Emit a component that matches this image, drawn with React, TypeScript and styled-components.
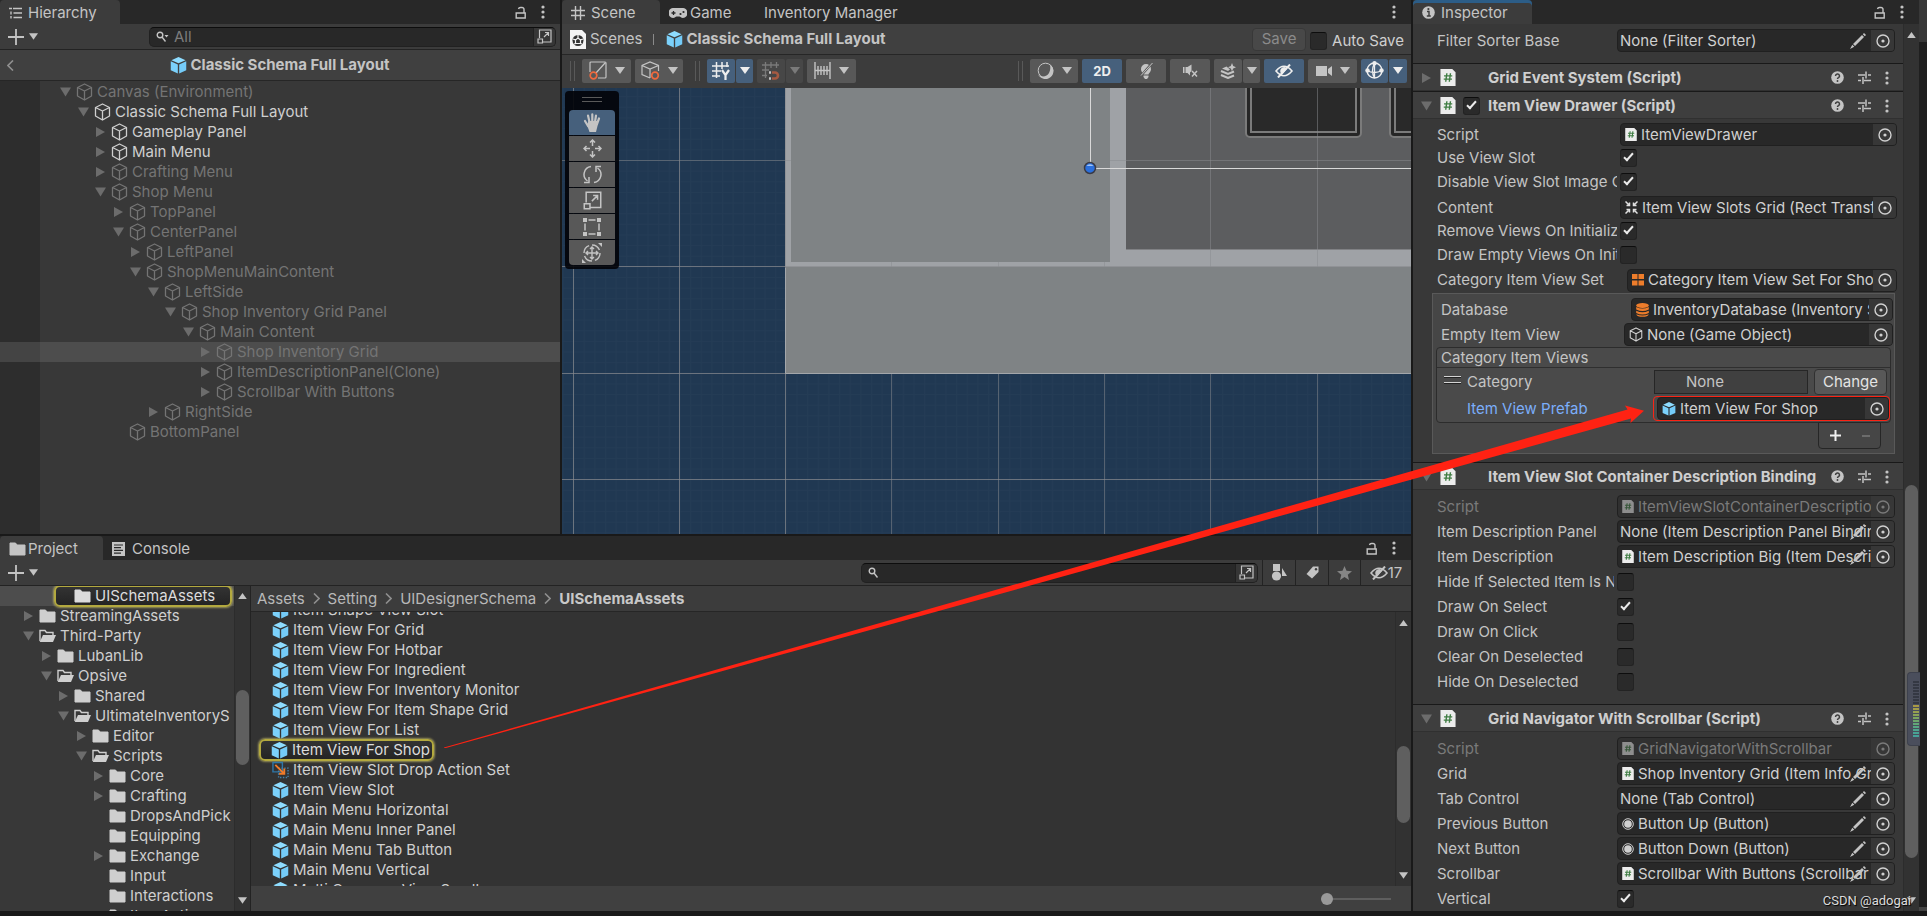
import React from 'react';
import styled, { createGlobalStyle, css } from 'styled-components';

const Global = createGlobalStyle`
  *, *::before, *::after { box-sizing: border-box; }
  body { margin: 0; background: #191919; overflow: hidden; }
  button, input { font: inherit; color: inherit; margin: 0; padding: 0; border: 0; background: none; }
  h1, h2, ul, ol { margin: 0; padding: 0; font-size: inherit; font-weight: inherit; list-style: none; }
  svg { display: block; flex: none; }
`;

/* ---------- icons ---------- */

const Glyph = styled.svg.attrs((p) => ({
  fill: p.fill ?? 'none',
  stroke: p.stroke ?? 'currentColor',
  'aria-hidden': true,
}))``;

const Caret = ({ size = 10 }: { size?: number }) => (
  <Glyph width={size} height="7" viewBox="0 0 10 7"><path d="M0 0h10L5 7z" fill="currentColor" stroke="none" /></Glyph>
);
const CaretUp = () => (
  <Glyph width="9" height="6" viewBox="0 0 10 7"><path d="M0 7h10L5 0z" fill="currentColor" stroke="none" /></Glyph>
);
const Arrow = ({ open }: { open: boolean }) => (
  <Glyph width="12" height="12" viewBox="0 0 12 12">
    <path d={open ? 'M1 1.500h11L6.500 10.500z' : 'M2 1l9 5-9 5z'} fill="#6c6c6c" stroke="none" />
  </Glyph>
);
const Cube = ({ size = 17 }: { size?: number }) => (
  <Glyph width={size} height={size + 1} viewBox="0 0 17 18" strokeWidth="1.300" strokeLinejoin="round">
    <path d="M8.500 1l7 3.500v8.500l-7 4-7-4V4.500zM1.500 4.500l7 3.500 7-3.500M8.500 8v9" />
  </Glyph>
);
const Prefab = ({ size = 17 }: { size?: number }) => (
  <Glyph width={size} height={size} viewBox="0 0 17 18" stroke="none">
    <path d="M8.500 0L16 3.400 8.500 6.700 1 3.400z" fill="#8edcff" />
    <path d="M.3 4.600l7.500 3.300v9.600L.3 14z" fill="#7bd1fb" />
    <path d="M16.700 4.600L9.200 7.900v9.600l7.500-3.500z" fill="#74cbf8" />
  </Glyph>
);
const Folder = ({ open }: { open?: boolean }) =>
  open ? (
    <Glyph width="17" height="14" viewBox="0 0 17 14">
      <path d="M1 12V1.500h5L7.500 3.500h6.500V6" strokeWidth="1.400" />
      <path d="M4 6h13l-3 7H.7z" fill="currentColor" stroke="none" />
    </Glyph>
  ) : (
    <Glyph width="17" height="14" viewBox="0 0 17 14">
      <path d="M1 1h5.500L8 3h8v10H1z" fill="currentColor" strokeLinejoin="round" />
    </Glyph>
  );
const Lock = () => (
  <Glyph width="12" height="13" viewBox="0 0 12 13" strokeWidth="1.400">
    <path d="M1.200 7h9v5h-9zM9 7V3.500a2 2 0 0 0-2-2H5.500a2 2 0 0 0-2 1.500" />
  </Glyph>
);
const Kebab = () => (
  <Glyph width="4" height="14" viewBox="0 0 4 14" stroke="none">
    {[2, 7, 12].map((y) => <circle key={y} cx="2" cy={y} r="1.600" fill="currentColor" />)}
  </Glyph>
);
const Plus = () => (
  <Glyph width="16" height="16" viewBox="0 0 16 16" strokeWidth="1.800"><path d="M8 0v16M0 8h16" /></Glyph>
);
const Lens = ({ menu }: { menu?: boolean }) => (
  <Glyph width="13" height="12" viewBox="0 0 13 12" strokeWidth="1.400">
    <circle cx="4" cy="4" r="2.800" /><path d="M6 6l3.500 4.500" />
    {menu && <path d="M8.500 4h4L10.500 6.500z" fill="currentColor" stroke="none" />}
  </Glyph>
);
const Expand = ({ size = 15 }: { size?: number }) => (
  <Glyph width={size} height={size} viewBox="0 0 15 15" strokeWidth="1.200">
    <path d="M2.500 9V1h11.500v12H6M1 10h4.500v4H1zM7 8l4.500-4.500M8 3.500h3.500V7" />
  </Glyph>
);
const Script = ({ small }: { small?: boolean }) => (
  <Glyph width={small ? 12 : 16} height={small ? 13 : 17} viewBox="0 0 16 18" stroke="none">
    <path d="M0 0h12.500L16 3.500V18H0z" fill="#ececec" />
    <path d="M6.800 4.500L5.600 13.500M10.600 4.500L9.400 13.500M3.800 7.300h8.700M3.500 10.700h8.700" stroke="#3f7d43" strokeWidth="1.500" />
  </Glyph>
);
const Target = () => (
  <Glyph width="14" height="14" viewBox="0 0 14 14" strokeWidth="1.400">
    <circle cx="7" cy="7" r="6" /><circle cx="7" cy="7" r="1.600" fill="currentColor" stroke="none" />
  </Glyph>
);
const Pencil = () => (
  <Glyph width="16" height="16" viewBox="0 0 16 16" stroke="none" fill="currentColor">
    <path d="M12 2l2 2L5 13l-2-2zM12.800 1.200l1.200-1.200L16 2l-1.200 1.200zM2.300 11.700l2 2L0 16z" />
  </Glyph>
);
const Help = () => (
  <Glyph width="13" height="13" viewBox="0 0 13 13" stroke="none">
    <circle cx="6.500" cy="6.500" r="6.300" fill="#c4c4c4" />
    <path d="M4.500 5a2 2 0 1 1 3 1.700c-.8.4-1 .7-1 1.400" stroke="#3e3e3e" strokeWidth="1.500" />
    <circle cx="6.500" cy="10" r=".95" fill="#3e3e3e" />
  </Glyph>
);
const Sliders = () => (
  <Glyph width="13" height="13" viewBox="0 0 13 13" strokeWidth="1.500">
    <path d="M0 4h7M10 4h3M8 0.500v7M0 9.500h3M6 9.500h7M5 6v7" />
  </Glyph>
);
const HierarchyGlyph = () => (
  <Glyph width="13" height="12" viewBox="0 0 13 12" strokeWidth="1.400">
    <path d="M0 1.500h3M4 1.500h9M4.500 6h8.500M4.500 10.500h8.500M2 4.500v3M2 9v2.500" />
  </Glyph>
);
const Hash = () => (
  <Glyph width="14" height="14" viewBox="0 0 14 14" strokeWidth="1.400"><path d="M4.500 0v14M9.500 0v14M0 4.500h14M0 9.500h14" /></Glyph>
);
const Gamepad = () => (
  <Glyph width="18" height="10" viewBox="0 0 18 10" stroke="none">
    <path d="M5 0h8a5 5 0 0 1 1 10c-2 0-2.500-1.500-3.500-1.500h-3C6.500 8.500 6 10 4 10A5 5 0 0 1 5 0z" fill="currentColor" />
    <path d="M2.500 5h4M4.500 3v4" stroke="#282828" strokeWidth="1.300" />
    <circle cx="11.500" cy="6" r="1.100" fill="#282828" /><circle cx="14.500" cy="4" r="1.100" fill="#282828" />
  </Glyph>
);
const Info = () => (
  <Glyph width="13" height="13" viewBox="0 0 13 13" stroke="none">
    <circle cx="6.500" cy="6.500" r="6.300" fill="currentColor" />
    <path d="M5 5.500h2v4M4.800 10h4" stroke="#3c3c3c" strokeWidth="1.400" /><circle cx="6.400" cy="3.100" r="1.100" fill="#3c3c3c" />
  </Glyph>
);
const ConsoleGlyph = () => (
  <Glyph width="13" height="14" viewBox="0 0 13 14" stroke="none">
    <path d="M0 0h13v14H0z" fill="currentColor" />
    <path d="M2 3h9M2 5.700h7M2 8.400h9M2 11.100h7" stroke="#282828" strokeWidth="1.200" />
  </Glyph>
);
const SceneFile = () => (
  <Glyph width="16" height="19" viewBox="0 0 16 19" stroke="none">
    <path d="M0 0h12l4 4v15H0z" fill="#f4f4f4" />
    <circle cx="8" cy="10.500" r="5.500" fill="#333" />
    <path d="M8 5v3l-2.500 2M8 8l2.500 2M3 9l2.500 1v3.500L4 14M13 9l-2.500 1v3.500L12 14M5.500 13.500h5" stroke="#f4f4f4" strokeWidth="1.200" />
  </Glyph>
);
const PivotIcon = () => (
  <Glyph width="18" height="19" viewBox="0 0 18 19" strokeWidth="1.200">
    <path d="M1 11V2q0-1 1-1h14q1 0 1 1v14q0 1-1 1H9M7 12l9-10" />
    <circle cx="4.500" cy="14.500" r="3.300" stroke="#f0693d" strokeWidth="1.700" />
  </Glyph>
);
const LocalIcon = () => (
  <Glyph width="19" height="19" viewBox="0 0 19 19" strokeWidth="1.200">
    <path d="M9 17l-8-3.500v-9L9 1l8.500 3.500V10M1 4.500l8 3.500 8.500-3.500M9 8v9" />
    <circle cx="14" cy="14.500" r="3.300" stroke="#f0693d" strokeWidth="1.700" />
  </Glyph>
);
const GridY = () => (
  <Glyph width="18" height="18" viewBox="0 0 18 18" strokeWidth="1.500">
    <path d="M4.500 0v16M10 0v7M15 0v5M0 4h17M0 9h9M0 14h8" />
    <path d="M10 8l3.500 5V18M17 8l-3.500 5" strokeWidth="2.200" />
  </Glyph>
);
const GridSnap = () => (
  <Glyph width="18" height="18" viewBox="0 0 18 18" strokeWidth="1.300">
    <path d="M3.500 0v16M9 0v6M14.500 0v6M0 3h17M0 8h7M0 13.500h5" />
    <path d="M10 10.500h3a3 3 0 0 1 0 6h-3" stroke="#a55a42" strokeWidth="2.600" />
    <path d="M7 10.500h2M7 16.500h2" stroke="#c4c4c4" strokeWidth="2.600" />
  </Glyph>
);
const Ruler = () => (
  <Glyph width="17" height="18" viewBox="0 0 17 18" strokeWidth="1.400">
    <path d="M1 0v17M4 4v9M7 4v9M10 4v9M13 4v9M16 0v17M1 8.500h15" />
  </Glyph>
);
const Shading = () => (
  <Glyph width="17" height="18" viewBox="0 0 17 18">
    <circle cx="8.500" cy="8.500" r="7.300" strokeWidth="1" />
    <path d="M13 2.500A8 8 0 1 1 1 12c3 4 9 3 11-1 1.600-3 1.500-6 1-8.500z" fill="currentColor" stroke="none" />
  </Glyph>
);
const Bulb = () => (
  <Glyph width="15" height="16" viewBox="0 0 15 16" stroke="none">
    <path d="M7 1a5 5 0 0 1 5 5c0 3-2 3.500-2.500 5.500h-5C4 9.500 2 9 2 6a5 5 0 0 1 5-5zM4.500 12.500h5V14L8 16H6l-1.500-2z" fill="currentColor" />
    <path d="M1 14L13 0" stroke="#585858" strokeWidth="2.200" /><path d="M2 12.500L13.500 0" stroke="currentColor" />
  </Glyph>
);
const Mute = () => (
  <Glyph width="15" height="13" viewBox="0 0 15 13" strokeWidth="1.500">
    <path d="M0 3h1.500v6H0zM2.500 3h2L8.500.5V7L7 8.500v3L4.500 9h-2z" fill="currentColor" stroke="none" /><path d="M9 7l5 5.500M14 7l-5 5.500" />
  </Glyph>
);
const Effects = () => (
  <Glyph width="16" height="16" viewBox="0 0 16 16">
    <path d="M1 8l7 3 6-2.500" strokeWidth="2" /><path d="M1 12l7 3 6-2.500" strokeWidth="2" />
    <path d="M2 5.500L6.500 3.500l3.500 3L8 8z" fill="currentColor" stroke="none" />
    <path d="M12 0l1.200 3 2.800 1.200-2.800 1.200L12 8.300l-1.200-2.900L8 4.200 10.800 3z" fill="currentColor" stroke="none" />
  </Glyph>
);
const EyeOff = () => (
  <Glyph width="18" height="14" viewBox="0 0 18 14" strokeWidth="1.600">
    <path d="M1 7q8-9.500 16 0-8 9.500-16 0z" /><path d="M6 7a3 3 0 0 1 5-2.300L7 9.300A3 3 0 0 1 6 7z" fill="currentColor" /><path d="M3 13.500L15 .5" strokeWidth="2" />
  </Glyph>
);
const Camera = () => (
  <Glyph width="16" height="12" viewBox="0 0 16 12" stroke="none" fill="currentColor"><path d="M0 1h11v10H0zM12 4l4-3v10l-4-3z" /></Glyph>
);
const Gizmo = () => (
  <Glyph width="19" height="19" viewBox="0 0 19 19" strokeWidth="1.300">
    <circle cx="9.500" cy="9.500" r="7.500" /><path d="M9.500 2q-4 8 0 15M2 9.500q7 4 15 0M9.500 2v15" />
    <g fill="currentColor" stroke="none"><circle cx="9.500" cy="2.300" r="2.200" /><circle cx="2.500" cy="9.500" r="2.200" /><circle cx="16.500" cy="9.500" r="2.200" /></g>
  </Glyph>
);
const Hand = () => (
  <Glyph width="19" height="20" viewBox="0 0 19 20" strokeLinecap="round" strokeWidth="2.200">
    <path d="M6.500 9L5 2.500M9.300 9V1.400M12 9l1-6.500M14 11l2-5.500M5 13L2 8" />
    <path d="M5.500 8h8.500l1 3-2 8H6.500L4 12z" fill="currentColor" stroke="none" />
  </Glyph>
);
const Move = () => (
  <Glyph width="19" height="19" viewBox="0 0 19 19" strokeWidth="1.500">
    <path d="M9.500 1v6M9.500 12v6M1 9.500h6M12 9.500h6M7 3.500L9.500 1 12 3.500M7 15.500L9.500 18l2.500-2.500M3.500 7L1 9.500 3.500 12M15.500 7L18 9.500 15.500 12" />
  </Glyph>
);
const Rotate = () => (
  <Glyph width="19" height="19" viewBox="0 0 19 19" strokeWidth="1.500">
    <path d="M8 1.500A8 8 0 0 0 4.500 16M1 17.500h5V12M11 17.500A8 8 0 0 0 14.500 3M18 1.500h-5V7" />
  </Glyph>
);
const RectTool = () => (
  <Glyph width="18" height="18" viewBox="0 0 18 18" strokeWidth="1.500">
    <path d="M5.500 2h7M5.500 16h7M2 5.500v7M16 5.500v7" />
    <path d="M0 0h4v4H0zM14 0h4v4h-4zM0 14h4v4H0zM14 14h4v4h-4z" fill="currentColor" stroke="none" />
  </Glyph>
);
const Transform = () => (
  <Glyph width="20" height="20" viewBox="0 0 20 20" strokeWidth="1.400">
    <circle cx="10" cy="10" r="8" strokeDasharray="9.500 3" />
    <path d="M10 4v12M4 10h12M8 6l2-2 2 2M8 14l2 2 2-2M6 8l-2 2 2 2M14 8l2 2-2 2" />
    <path d="M16 0h4v4zM0 16v4h4z" fill="currentColor" stroke="none" />
  </Glyph>
);
const DropAction = () => (
  <Glyph width="17" height="18" viewBox="0 0 18 18" strokeWidth="1.500">
    <path d="M1 1h10v10H1z" stroke="#2f77a8" /><path d="M7 7h10v10H7z" stroke="#4682ab" strokeDasharray="1.500 1.500" />
    <path d="M3.500 3.500l9 9M13 7.500V13H7.500" stroke="#f07b2a" strokeWidth="2" />
  </Glyph>
);
const RectTransformIcon = () => (
  <Glyph width="13" height="13" viewBox="0 0 13 13" strokeWidth="1.500" stroke="#e0e0e0">
    <path d="M0.500 0.500l3 3M12.500 0.500L9.500 3.500M0.500 12.500l3-3M12.500 12.500L9.500 9.500M4.500 1.500v3h-3M8.500 1.500v3h3M1.500 8.500h3v3M11.500 8.500h-3v3" />
  </Glyph>
);
const CategorySet = () => (
  <Glyph width="12" height="12" viewBox="0 0 12 12" stroke="none" fill="#ee7d2b"><path d="M0 0h5.500v5H0zM6.500 0H12v5H6.500zM0 6.500h5.500v5H0zM6.500 6.500H12v5H6.500z" /></Glyph>
);
const DatabaseIcon = () => (
  <Glyph width="13" height="14" viewBox="0 0 13 14" stroke="none" fill="#ee7d2b">
    <ellipse cx="6.500" cy="2.500" rx="6.300" ry="2.400" />
    <path d="M.2 4q6.300 3 12.600 0v2.500q-6.300 3-12.600 0zM.2 7.700q6.300 3 12.600 0V10q-6.300 3-12.600 0zM.2 11.200q6.300 2.800 12.600 0-1 2.600-6.300 2.600T.2 11.200z" />
  </Glyph>
);
const ButtonIcon = () => (
  <Glyph width="12" height="12" viewBox="0 0 12 12"><circle cx="6" cy="6" r="5.300" /><circle cx="6" cy="6" r="3.800" fill="currentColor" stroke="none" /></Glyph>
);
const Shapes = () => (
  <Glyph width="16" height="17" viewBox="0 0 16 17" stroke="none" fill="currentColor"><path d="M2 0h7v7H2zM11 4l5 8h-5z" /><circle cx="5.500" cy="12" r="4.600" /></Glyph>
);
const Tag = () => (
  <Glyph width="13" height="13" viewBox="0 0 13 13" stroke="none"><path d="M7 0.500h5.500V6L6 12.500.5 8z" fill="currentColor" /><circle cx="10" cy="3.200" r="1.200" fill="#3c3c3c" /></Glyph>
);
const Star = () => (
  <Glyph width="15" height="14" viewBox="0 0 15 14" stroke="none" fill="currentColor"><path d="M7.500 0l2 4.800 5.500.4-4.200 3.500L12 14l-4.500-2.900L3 14l1.300-5.300L0 5.200l5.500-.4z" /></Glyph>
);
const Chevron = ({ back }: { back?: boolean }) => (
  <Glyph width="7" height="11" viewBox="0 0 7 11" strokeWidth="1.600" stroke="#8f8f8f"><path d={back ? 'M6 .5L1 5.500l5 5' : 'M1 .5l5 5-5 5'} /></Glyph>
);

/* ---------- shell ---------- */

const Editor = styled.main`
  position: relative;
  display: grid;
  grid-template-columns: minmax(0, 1fr) 508px 8px;
  height: 100vh;
  padding-bottom: 5px;
  overflow: hidden;
  background: #191919;
  color: #c4c4c4;
  font: 400 15px/20px Inter, 'Liberation Sans', sans-serif;
  white-space: nowrap;
`;
const Workspace = styled.div`
  display: grid;
  grid-template-columns: 560px minmax(0, 1fr);
  grid-template-rows: minmax(0, 534fr) minmax(0, 375fr);
  gap: 2px;
  min-height: 0;
`;
const Panel = styled.section<{ $wide?: boolean }>`
  display: flex;
  flex-direction: column;
  min-width: 0;
  min-height: 0;
  overflow: hidden;
  background: #383838;
  ${(p) => p.$wide && css`grid-column: 1 / -1;`}
`;
const SidePanel = styled(Panel)`
  margin-left: 2px;
`;
const TabBar = styled.header`
  display: flex;
  align-items: stretch;
  flex: none;
  height: 24px;
  background: #282828;
`;
const Tab = styled.button<{ $active?: boolean; $focus?: boolean; $width?: number; $gap?: number }>`
  display: flex;
  align-items: center;
  gap: ${(p) => p.$gap ?? 6}px;
  width: ${(p) => (p.$width ? `${p.$width}px` : 'auto')};
  padding: 1px 9px 0;
  border-radius: 4px 4px 0 0;
  background: ${(p) => (p.$active ? '#3c3c3c' : 'transparent')};
  box-shadow: ${(p) => (p.$focus ? 'inset 0 3px #2c5d87' : 'none')};
`;
const TabActions = styled.div`
  display: flex;
  align-items: center;
  gap: 14px;
  margin-left: auto;
  padding-right: 15px;
`;
const IconButton = styled.button`
  display: grid;
  place-items: center;
`;
const Toolbar = styled.div`
  display: flex;
  align-items: center;
  flex: none;
  height: 26px;
  background: #3c3c3c;
  border-bottom: 1px solid #232323;
`;
const AddButton = styled.button`
  display: flex;
  align-items: center;
  gap: 5px;
  margin-left: 8px;
`;
const SearchBox = styled.label<{ $width: number }>`
  display: flex;
  align-items: center;
  gap: 5px;
  width: ${(p) => p.$width}px;
  height: 20px;
  margin-left: auto;
  margin-right: 4px;
  padding-left: 6px;
  overflow: hidden;
  border: 1px solid #212121;
  border-top-color: #0d0d0d;
  border-radius: 5px;
  background: #282828;
  input { flex: 1; min-width: 0; outline: 0; }
  input::placeholder { color: #7c7c7c; opacity: 1; }
  button { width: 22px; height: 18px; background: #363636; border-left: 1px solid #212121; }
`;

/* ---------- trees ---------- */

const TreeList = styled.ul`
  flex: 1;
  min-width: 0;
  overflow: hidden;
`;
const TreeRow = styled.li<{ $depth: number; $base: number; $dim?: boolean; $selected?: boolean }>`
  display: flex;
  align-items: center;
  height: 20px;
  padding-left: ${(p) => p.$base + Math.round(p.$depth * 17.5)}px;
  color: ${(p) => (p.$dim ? '#747474' : '#cfcfcf')};
  background: ${(p) => (p.$selected ? 'rgba(255,255,255,.11)' : 'none')};
`;
const ArrowSlot = styled.span`
  flex: none;
  width: 17px;
`;
const RowText = styled.span`
  margin-left: 4px;
`;
const HierarchyTitle = styled.div`
  display: grid;
  grid-template-columns: 1fr auto 1fr;
  align-items: center;
  flex: none;
  height: 31px;
  padding: 0 7px;
  background: #404040;
  border-bottom: 1px solid #262626;
  > button { justify-self: start; }
`;
const Titled = styled.strong`
  display: flex;
  align-items: center;
  gap: 3px;
  font-weight: 700;
`;
const HierarchyBody = styled.div`
  display: flex;
  flex: 1;
  min-height: 0;
  padding-top: 1px;
  background: linear-gradient(90deg, #2d2d2d 40px, #383838 40px);
`;

/* ---------- scene ---------- */

const SceneBar = styled.div`
  display: flex;
  align-items: center;
  flex: none;
  height: 31px;
  padding: 0 7px 0 8px;
  background: #404040;
  border-bottom: 1px solid #262626;
`;
const Crumb = styled.span`
  display: flex;
  align-items: center;
  gap: 4px;
  padding-right: 11px;
`;
const CrumbRule = styled.i`
  width: 1px;
  height: 11px;
  margin-right: 12px;
  background: #8a8a8a;
`;
const SaveButton = styled.button`
  height: 23px;
  width: 54px;
  margin: 0 4px 0 auto;
  border: 1px solid #383838;
  border-radius: 4px;
  background: #484848;
  color: #8b8b8b;
`;
const CheckLabel = styled.label`
  display: flex;
  align-items: center;
  gap: 5px;
  padding-top: 4px;
  color: #cfcfcf;
`;
const Check = styled.input.attrs({ type: 'checkbox' })`
  appearance: none;
  position: relative;
  flex: none;
  width: 17px;
  height: 18px;
  border: 1px solid #232323;
  border-top-color: #0d0d0d;
  border-radius: 3px;
  background: #2a2a2a;
  &:checked::after {
    content: '';
    position: absolute;
    left: 5px;
    top: 1px;
    width: 5px;
    height: 10px;
    border: solid #ebebeb;
    border-width: 0 2px 2px 0;
    transform: rotate(42deg);
  }
`;
const ToolStrip = styled.div`
  display: flex;
  align-items: center;
  flex: none;
  gap: 4px;
  height: 33px;
  padding: 0 4px 2px 8px;
  background: #3c3c3c;
`;
const Grip = styled.i<{ $push?: boolean }>`
  width: 5px;
  height: 20px;
  margin-left: ${(p) => (p.$push ? 'auto' : '8px')};
  margin-right: 3px;
  border: solid #595959;
  border-width: 0 1px;
  &:first-child { margin-left: 0; }
`;
const ToolGroup = styled.div<{ $off?: boolean }>`
  display: flex;
  gap: 1px;
  color: ${(p) => (p.$off ? '#7a7a7a' : '#c4c4c4')};
`;
const Tool = styled.button<{ $w: number; $on?: boolean; $off?: boolean }>`
  display: flex;
  align-items: center;
  justify-content: center;
  gap: 8px;
  width: ${(p) => p.$w}px;
  height: 24px;
  border-radius: 2px;
  font-weight: 700;
  font-size: 13px;
  background: ${(p) => (p.$on ? '#46607c' : p.$off ? '#474747' : '#585858')};
  color: ${(p) => (p.$on ? '#eeeeee' : 'inherit')};
`;
const Viewport = styled.div`
  position: relative;
  flex: 1;
  min-height: 0;
  overflow: hidden;
  background: #203852;
  > svg { width: 100%; height: 100%; }
`;
const Palette = styled.div`
  position: absolute;
  left: 3px;
  top: 3px;
  display: flex;
  flex-direction: column;
  gap: 1px;
  padding: 6px 4px 4px;
  border-radius: 4px;
  background: rgba(2, 3, 8, .9);
`;
const PaletteGrip = styled.i`
  width: 20px;
  height: 5px;
  margin: 0 auto 7px;
  border: solid #5a5a5a;
  border-width: 1px 0;
`;
const PaletteTool = styled.button<{ $on?: boolean }>`
  display: grid;
  place-items: center;
  width: 46px;
  height: 25px;
  background: ${(p) => (p.$on ? '#46607c' : '#585858')};
  &:first-of-type { border-radius: 4px 4px 0 0; }
  &:last-of-type { border-radius: 0 0 4px 4px; }
`;

/* ---------- project ---------- */

const ProjectBody = styled.div`
  display: grid;
  grid-template-columns: 250px minmax(0, 1fr);
  flex: 1;
  min-height: 0;
  column-gap: 1px;
  background: #232323;
`;
const Column = styled.div`
  display: flex;
  flex-direction: column;
  min-width: 0;
  min-height: 0;
  background: #333333;
`;
const Pane = styled.div<{ $bg?: string }>`
  display: flex;
  flex: 1;
  min-width: 0;
  min-height: 0;
  overflow: hidden;
  background: ${(p) => p.$bg ?? '#333333'};
`;
const ScrollTrack = styled.div<{ $start: number; $size: number; $lead: number }>`
  display: flex;
  flex-direction: column;
  align-items: center;
  justify-content: space-between;
  flex: none;
  position: relative;
  width: 16px;
  padding: ${(p) => p.$lead}px 0 7px;
  border-left: 1px solid #2c2c2c;
  background: #323232;
  &::after {
    content: '';
    position: absolute;
    left: 1px;
    right: 1px;
    top: ${(p) => p.$start}%;
    height: ${(p) => p.$size}%;
    border-radius: 7px;
    background: #5f5f5f;
  }
`;
const Halo = styled.span`
  display: flex;
  align-items: center;
  height: 22px;
  margin-left: -20px;
  padding: 0 15px 0 18px;
  border: 2px solid #b3a93f;
  border-radius: 6px;
  background: linear-gradient(#333, #242424);
  box-shadow: 0 0 2px 1px rgba(214, 204, 110, .6);
  color: #dcdcdc;
`;
const AssetHalo = styled(Halo)`
  margin-left: -13px;
  padding: 0 2px 0 10px;
`;
const Crumbs = styled.ol`
  display: flex;
  align-items: center;
  gap: 8px;
  flex: none;
  height: 26px;
  padding-left: 6px;
  background: #3c3c3c;
  border-bottom: 1px solid #262626;
  li { display: flex; align-items: center; gap: 8px; }
  a { color: #b8b8b8; text-decoration: none; }
  a[aria-current] { font-weight: 700; color: #c8c8c8; }
`;
const AssetList = styled.ul`
  flex: 1;
  margin-top: -12px;
`;
const AssetRow = styled.li`
  display: flex;
  align-items: center;
  height: 20px;
  padding-left: 21px;
  color: #d0d0d0;
`;
const Footer = styled.div`
  display: flex;
  align-items: center;
  justify-content: flex-end;
  flex: none;
  height: 25px;
  padding-right: 20px;
  background: #404040;
`;
const Zoom = styled.input.attrs({ type: 'range' })`
  appearance: none;
  width: 70px;
  height: 14px;
  &::-webkit-slider-runnable-track { height: 2px; background: #5e5e5e; }
  &::-webkit-slider-thumb { appearance: none; width: 12px; height: 12px; margin-top: -5px; border-radius: 50%; background: #999; }
`;
const FilterButton = styled.button<{ $w: number; $muted?: boolean }>`
  display: flex;
  align-items: center;
  justify-content: center;
  width: ${(p) => p.$w}px;
  height: 25px;
  border-left: 1px solid #232323;
  color: ${(p) => (p.$muted ? '#858585' : 'inherit')};
`;
const Filters = styled.div`
  display: flex;
`;

/* ---------- inspector ---------- */

const InspectorBody = styled.div`
  display: flex;
  flex: 1;
  min-height: 0;
`;
const Components = styled.div`
  flex: 1;
  min-width: 0;
  overflow: hidden;
`;
const ComponentHeader = styled.div`
  display: flex;
  align-items: center;
  height: 28px;
  padding: 0 14px 0 7px;
  border: solid #191919;
  border-width: 1px 0 0;
  background: #3e3e3e;
  box-shadow: inset 0 -1px #303030;
`;
const HeaderIcon = styled.span`
  display: flex;
  width: 23px;
  margin-left: 8px;
`;
const HeaderToggle = styled.span`
  display: flex;
  width: 25px;
`;
const ComponentTitle = styled.h2`
  flex: 1;
  min-width: 0;
  font-weight: 700;
  color: #cfcfcf;
`;
const HeaderActions = styled.div`
  display: flex;
  align-items: center;
  justify-content: space-between;
  width: 58px;
`;
const Rows = styled.div<{ $end: number; $pad: string }>`
  display: flex;
  flex-direction: column;
  padding: ${(p) => p.$pad};
  padding-left: 24px;
  padding-right: ${(p) => p.$end}px;
`;
const Property = styled.div<{ $h?: number; $dim?: boolean }>`
  display: flex;
  align-items: center;
  height: ${(p) => p.$h ?? 25}px;
  ${(p) => p.$dim && css`color: #7a7a7a;`}
`;
const PropertyLabel = styled.label<{ $w: number; $accent?: boolean }>`
  flex: none;
  width: ${(p) => p.$w}px;
  margin-right: 3px;
  overflow: hidden;
  ${(p) => p.$accent && css`color: #7baefa;`}
`;
const ObjectBox = styled.div<{ $dim?: boolean }>`
  position: relative;
  display: flex;
  align-items: stretch;
  flex: 1;
  min-width: 0;
  height: 23px;
  overflow: hidden;
  border: 1px solid #202020;
  border-radius: 4px;
  background: ${(p) => (p.$dim ? '#303030' : '#282828')};
  color: ${(p) => (p.$dim ? '#7a7a7a' : '#d0d0d0')};
  > svg { position: absolute; right: 28px; top: 3px; color: #c4c4c4; }
`;
const ObjectValue = styled.output<{ $iconless?: boolean; $dim?: boolean }>`
  display: flex;
  align-items: center;
  gap: 4px;
  flex: 1;
  min-width: 0;
  overflow: hidden;
  padding-left: ${(p) => (p.$iconless ? 2 : 4)}px;
  > svg { opacity: ${(p) => (p.$dim ? 0.5 : 1)}; }
`;
const TargetButton = styled(IconButton)`
  flex: none;
  width: 23px;
  background: #373737;
`;
const Group = styled.div`
  height: 161px;
  margin: 0 2px 8px -5px;
  padding: 3px 1px 0 3px;
  border: 1px solid #595959;
  background: #464646;
`;
const GroupRow = styled(Property)`
  padding-left: 5px;
`;
const ListBox = styled.div`
  margin-right: 2px;
  border: 1px solid #2c2c2c;
  border-radius: 4px;
  background: #4a4a4a;
`;
const ListHead = styled.div`
  height: 20px;
  padding-left: 4px;
  line-height: 19px;
  border-bottom: 1px solid #2f2f2f;
`;
const ListRow = styled.div`
  display: flex;
  align-items: center;
  height: 27px;
  padding-left: 7px;
`;
const DragHandle = styled.i`
  width: 17px;
  height: 7px;
  margin: 0 6px 4px 0;
  border: solid #d4d4d4;
  border-width: 1px 0;
  box-shadow: 0 1px #222, inset 0 1px #222;
`;
const ListIndent = styled.span`
  width: 23px;
`;
const CategoryValue = styled.output`
  width: 154px;
  height: 24px;
  padding-left: 31px;
  border: 1px solid #262626;
  background: #404040;
  line-height: 22px;
`;
const ChangeButton = styled.button`
  width: 73px;
  height: 26px;
  margin-left: 6px;
  border: 1px solid #303030;
  border-radius: 4px;
  background: #585858;
  color: #e4e4e4;
`;
const Marked = styled.div`
  display: flex;
  align-items: center;
  flex: 1;
  min-width: 0;
  height: 25px;
  padding-left: 3px;
  border: 1px solid #fb2314;
  border-radius: 4px;
`;
const ListFooter = styled.div`
  display: flex;
  align-items: center;
  justify-content: space-around;
  width: 63px;
  height: 27px;
  margin: -1px 12px 0 auto;
  border: 1px solid #262626;
  border-radius: 0 0 4px 4px;
  background: #464646;
  color: #f0f0f0;
  button:disabled { color: #6c6c6c; }
`;
const Rail = styled.aside`
  display: flex;
  flex-direction: column;
  justify-content: space-between;
  background: #1f1f1f;
  &::before { content: ''; height: 42px; background: #383838; }
  &::after { content: ''; height: 4px; background: #444; }
`;
const Meter = styled.div`
  position: absolute;
  right: 7px;
  top: 672px;
  width: 13px;
  height: 74px;
  padding: 8px 0 7px 5px;
  border: 1px solid #3d414d;
  border-right: 0;
  border-radius: 4px 0 0 4px;
  background: #4a4e5c;
`;
const Annotation = styled.svg`
  position: absolute;
  right: 283px;
  top: 405px;
  pointer-events: none;
`;
const Watermark = styled.span`
  position: absolute;
  right: 16px;
  bottom: 5px;
  font: 13px/20px Roboto, sans-serif;
  color: #dcdcdc;
  text-shadow: 1px 1px 1px #000;
`;

/* ---------- data ---------- */

type Node = [name: string, depth: number, state: 'open' | 'closed' | 'leaf', lit?: boolean];

const hierarchy: Node[] = [
  ['Canvas (Environment)', 0, 'open'],
  ['Classic Schema Full Layout', 1, 'open', true],
  ['Gameplay Panel', 2, 'closed', true],
  ['Main Menu', 2, 'closed', true],
  ['Crafting Menu', 2, 'closed'],
  ['Shop Menu', 2, 'open'],
  ['TopPanel', 3, 'closed'],
  ['CenterPanel', 3, 'open'],
  ['LeftPanel', 4, 'closed'],
  ['ShopMenuMainContent', 4, 'open'],
  ['LeftSide', 5, 'open'],
  ['Shop Inventory Grid Panel', 6, 'open'],
  ['Main Content', 7, 'open'],
  ['Shop Inventory Grid', 8, 'closed'],
  ['ItemDescriptionPanel(Clone)', 8, 'closed'],
  ['Scrollbar With Buttons', 8, 'closed'],
  ['RightSide', 5, 'closed'],
  ['BottomPanel', 3, 'leaf'],
];

const folders: Node[] = [
  ['UISchemaAssets', 2, 'leaf'],
  ['StreamingAssets', 0, 'closed'],
  ['Third-Party', 0, 'open'],
  ['LubanLib', 1, 'closed'],
  ['Opsive', 1, 'open'],
  ['Shared', 2, 'closed'],
  ['UltimateInventoryS', 2, 'open'],
  ['Editor', 3, 'closed'],
  ['Scripts', 3, 'open'],
  ['Core', 4, 'closed'],
  ['Crafting', 4, 'closed'],
  ['DropsAndPick', 4, 'leaf'],
  ['Equipping', 4, 'leaf'],
  ['Exchange', 4, 'closed'],
  ['Input', 4, 'leaf'],
  ['Interactions', 4, 'leaf'],
  ['ItemActions', 4, 'leaf'],
];

const assets = [
  'Item Shape View Slot', 'Item View For Grid', 'Item View For Hotbar', 'Item View For Ingredient',
  'Item View For Inventory Monitor', 'Item View For Item Shape Grid', 'Item View For List', 'Item View For Shop',
  'Item View Slot Drop Action Set', 'Item View Slot', 'Main Menu Horizontal', 'Main Menu Inner Panel',
  'Main Menu Tab Button', 'Main Menu Vertical', 'Multi Currency View Small',
];

/* ---------- parts ---------- */

type ValueProps = { text: string; icon?: React.ReactNode; pencil?: boolean; dim?: boolean };

function ObjectField({ label, text, icon, pencil, dim }: ValueProps & { label: string }) {
  return (
    <ObjectBox $dim={dim}>
      <ObjectValue aria-label={label} $iconless={!icon} $dim={dim}>{icon}<span>{text}</span></ObjectValue>
      {pencil && <Pencil />}
      <TargetButton aria-label={`Pick ${label}`} disabled={dim}><Target /></TargetButton>
    </ObjectBox>
  );
}

function Field({ label, labelWidth = 177, h, ...rest }: ValueProps & { label: string; labelWidth?: number; h?: number }) {
  return (
    <Property $h={h} $dim={rest.dim}>
      <PropertyLabel as="span" $w={labelWidth}>{label}</PropertyLabel>
      <ObjectField label={label} {...rest} />
    </Property>
  );
}

function Toggle({ label, checked, labelWidth = 177, h }: { label: string; checked?: boolean; labelWidth?: number; h?: number }) {
  const id = React.useId();
  return (
    <Property $h={h}>
      <PropertyLabel $w={labelWidth} htmlFor={id}>{label}</PropertyLabel>
      <Check id={id} defaultChecked={checked} />
    </Property>
  );
}

function Header({ title, open, enabled }: { title: string; open: boolean; enabled?: boolean }) {
  return (
    <ComponentHeader>
      <IconButton aria-label={`Toggle ${title}`}><Arrow open={open} /></IconButton>
      <HeaderIcon><Script /></HeaderIcon>
      <HeaderToggle>{enabled && <Check defaultChecked aria-label={`Enable ${title}`} />}</HeaderToggle>
      <ComponentTitle>{title}</ComponentTitle>
      <HeaderActions>
        <IconButton aria-label="Help"><Help /></IconButton>
        <IconButton aria-label="Presets"><Sliders /></IconButton>
        <IconButton aria-label="More"><Kebab /></IconButton>
      </HeaderActions>
    </ComponentHeader>
  );
}

function PanelActions() {
  return (
    <TabActions>
      <IconButton aria-label="Lock"><Lock /></IconButton>
      <IconButton aria-label="More"><Kebab /></IconButton>
    </TabActions>
  );
}

function Hierarchy() {
  return (
    <Panel aria-label="Hierarchy">
      <TabBar>
        <Tab $active $width={120}><HierarchyGlyph />Hierarchy</Tab>
        <PanelActions />
      </TabBar>
      <Toolbar>
        <AddButton aria-label="Create"><Plus /><Caret size={9} /></AddButton>
        <SearchBox $width={407}>
          <Lens menu />
          <input placeholder="All" aria-label="Search hierarchy" />
          <IconButton aria-label="Open search window"><Expand /></IconButton>
        </SearchBox>
      </Toolbar>
      <HierarchyTitle>
        <IconButton aria-label="Back"><Chevron back /></IconButton>
        <Titled><Prefab />Classic Schema Full Layout</Titled>
      </HierarchyTitle>
      <HierarchyBody>
        <TreeList>
          {hierarchy.map(([name, depth, state, lit]) => (
            <TreeRow key={name} $depth={depth} $base={59} $dim={!lit} $selected={name === 'Shop Inventory Grid'}>
              <ArrowSlot>{state !== 'leaf' && <Arrow open={state === 'open'} />}</ArrowSlot>
              <Cube />
              <RowText>{name}</RowText>
            </TreeRow>
          ))}
        </TreeList>
      </HierarchyBody>
    </Panel>
  );
}

const gridX = [11, 117, 223, 329, 436, 542, 648, 755];
const gridY = [72, 178, 285, 391];

function SceneCanvas() {
  return (
    <svg aria-hidden="true">
      <defs>
        <pattern id="minor" width="10.640" height="10.640" patternUnits="userSpaceOnUse" x="11" y="72">
          <path d="M.5 0v10.640M0 .5h10.640" stroke="#fff" strokeOpacity=".018" fill="none" />
        </pattern>
      </defs>
      <rect width="100%" height="100%" fill="url(#minor)" />
      <rect x="223" width="100%" height="285" fill="#7f8385" />
      <rect x="223" width="100%" height="179" fill="#9fa2a6" />
      <rect x="564" width="100%" height="161" fill="#5c5d5f" />
      <path d="M564 161.500H2000" stroke="#808184" />
      {[684, 828].map((x) => (
        <g key={x} fill="none">
          <rect x={x} y="-20" width="115" height="69" rx="4" fill="#262626" stroke="#7b7b7b" strokeWidth="2" />
          <rect x={x + 5} y="-20" width="105" height="64" fill="#292929" stroke="#7b7b7b" strokeWidth="2" />
        </g>
      ))}
      <g stroke="#8a8c90" fill="none">
        {gridX.map((x) => <path key={x} d={`M${x}.500 0V600`} strokeOpacity={x > 300 ? 0.5 : 0.7} />)}
        {gridY.map((y) => <path key={y} d={`M0 ${y}.500H2000`} strokeOpacity={y < 80 ? 0.5 : 0.7} />)}
      </g>
      <path d="M229 0h319v174H229z" fill="#7f8385" />
      <path d="M224 179H2000v106H224z" fill="#7f8385" />
      <path d="M223.500 180V285.500H2000" stroke="#a3a6aa" fill="none" />
      <path d="M528.500 0V80.500H2000" stroke="#d9d9d9" fill="none" />
      <circle cx="528" cy="80" r="5.500" fill="#2a6fdc" stroke="#3b3b45" strokeWidth="1.500" />
      <path d="M524.500 78a4 3.500 0 0 1 7 0z" fill="#a4c4f4" />
    </svg>
  );
}

const TabSpacer = styled.span`
  width: 6px;
`;

function Scene() {
  return (
    <Panel aria-label="Scene">
      <TabBar>
        <Tab $active $width={98}><Hash />Scene</Tab>
        <Tab $width={83} $gap={3}><Gamepad />Game</Tab>
        <Tab><TabSpacer />Inventory Manager</Tab>
        <TabActions><IconButton aria-label="More"><Kebab /></IconButton></TabActions>
      </TabBar>
      <SceneBar>
        <Crumb><SceneFile />Scenes</Crumb>
        <CrumbRule />
        <Titled><Prefab />Classic Schema Full Layout</Titled>
        <SaveButton disabled>Save</SaveButton>
        <CheckLabel><Check />Auto Save</CheckLabel>
      </SceneBar>
      <ToolStrip>
        <Grip />
        <Tool $w={49} aria-label="Pivot"><PivotIcon /><Caret /></Tool>
        <Tool $w={48} aria-label="Local"><LocalIcon /><Caret /></Tool>
        <Grip />
        <ToolGroup><Tool $w={28} $on aria-label="Grid"><GridY /></Tool><Tool $w={17} $on aria-label="Grid options"><Caret /></Tool></ToolGroup>
        <ToolGroup $off><Tool $w={28} $off aria-label="Snap"><GridSnap /></Tool><Tool $w={17} $off aria-label="Snap options"><Caret /></Tool></ToolGroup>
        <Tool $w={49} aria-label="Increment"><Ruler /><Caret /></Tool>
        <Grip $push />
        <Tool $w={48} aria-label="Shading"><Shading /><Caret /></Tool>
        <Tool $w={40} $on>2D</Tool>
        <Tool $w={40} aria-label="Lighting"><Bulb /></Tool>
        <Tool $w={40} aria-label="Audio"><Mute /></Tool>
        <ToolGroup><Tool $w={28} aria-label="Effects"><Effects /></Tool><Tool $w={17} aria-label="Effect options"><Caret /></Tool></ToolGroup>
        <Tool $w={40} $on aria-label="Visibility"><EyeOff /></Tool>
        <Tool $w={49} aria-label="Camera"><Camera /><Caret /></Tool>
        <ToolGroup><Tool $w={27} $on aria-label="Gizmos"><Gizmo /></Tool><Tool $w={18} $on aria-label="Gizmo options"><Caret /></Tool></ToolGroup>
      </ToolStrip>
      <Viewport>
        <SceneCanvas />
        <Palette>
          <PaletteGrip />
          <PaletteTool $on aria-label="Hand"><Hand /></PaletteTool>
          <PaletteTool aria-label="Move"><Move /></PaletteTool>
          <PaletteTool aria-label="Rotate"><Rotate /></PaletteTool>
          <PaletteTool aria-label="Scale"><Expand size={19} /></PaletteTool>
          <PaletteTool aria-label="Rect"><RectTool /></PaletteTool>
          <PaletteTool aria-label="Transform"><Transform /></PaletteTool>
        </Palette>
      </Viewport>
    </Panel>
  );
}

function Project() {
  return (
    <Panel $wide aria-label="Project">
      <TabBar>
        <Tab $active $width={103} $gap={2}><Folder />Project</Tab>
        <Tab $gap={7}><ConsoleGlyph />Console</Tab>
        <PanelActions />
      </TabBar>
      <Toolbar>
        <AddButton aria-label="Create"><Plus /><Caret size={9} /></AddButton>
        <SearchBox $width={397}>
          <Lens />
          <input aria-label="Search project" />
          <IconButton aria-label="Open search window"><Expand /></IconButton>
        </SearchBox>
        <Filters>
          <FilterButton $w={33} aria-label="Filter by type"><Shapes /></FilterButton>
          <FilterButton $w={33} aria-label="Filter by label"><Tag /></FilterButton>
          <FilterButton $w={32} $muted aria-label="Favorite"><Star /></FilterButton>
          <FilterButton $w={51}><EyeOff />17</FilterButton>
        </Filters>
      </Toolbar>
      <ProjectBody>
        <Pane $bg="#383838">
          <TreeList>
            {folders.map(([name, depth, state], i) => (
              <TreeRow key={name} $depth={depth} $base={22} $selected={i === 0}>
                <ArrowSlot>{state !== 'leaf' && <Arrow open={state === 'open'} />}</ArrowSlot>
                {i === 0 ? <Halo><Folder /><RowText>{name}</RowText></Halo> : <><Folder open={state === 'open'} /><RowText>{name}</RowText></>}
              </TreeRow>
            ))}
          </TreeList>
          <ScrollTrack $lead={7} $start={32} $size={23}><CaretUp /><Caret size={9} /></ScrollTrack>
        </Pane>
        <Column>
          <Crumbs>
            {['Assets', 'Setting', 'UIDesignerSchema'].map((c) => <li key={c}><a href="#">{c}</a><Chevron /></li>)}
            <li><a href="#" aria-current="page">UISchemaAssets</a></li>
          </Crumbs>
          <Pane>
            <AssetList>
              {assets.map((name) => (
                <AssetRow key={name}>
                  {name === 'Item View For Shop' ? (
                    <AssetHalo><Prefab /><RowText>{name}</RowText></AssetHalo>
                  ) : (
                    <>{name.includes('Action') ? <DropAction /> : <Prefab />}<RowText>{name}</RowText></>
                  )}
                </AssetRow>
              ))}
            </AssetList>
            <ScrollTrack $lead={8} $start={49} $size={28}><CaretUp /><Caret size={9} /></ScrollTrack>
          </Pane>
          <Footer><Zoom min={0} max={100} defaultValue={0} aria-label="Icon size" /></Footer>
        </Column>
      </ProjectBody>
    </Panel>
  );
}

function Inspector() {
  const script = <Script small />;
  return (
    <SidePanel aria-label="Inspector">
      <TabBar>
        <Tab $active $focus $width={119}><Info />Inspector</Tab>
        <PanelActions />
      </TabBar>
      <InspectorBody>
        <Components>
          <Rows $end={8} $pad="4px 0 10px">
            <Field label="Filter Sorter Base" text="None (Filter Sorter)" pencil />
          </Rows>
          <Header title="Grid Event System (Script)" open={false} />
          <Header title="Item View Drawer (Script)" open enabled />
          <Rows $end={6} $pad="3px 0 0">
            <Field label="Script" labelWidth={180} text="ItemViewDrawer" icon={script} />
            <Toggle label="Use View Slot" labelWidth={180} h={22} checked />
            <Toggle label="Disable View Slot Image Component" labelWidth={180} h={26} checked />
            <Field label="Content" labelWidth={180} text="Item View Slots Grid (Rect Transform)" icon={<RectTransformIcon />} />
            <Toggle label="Remove Views On Initialize" labelWidth={180} h={22} checked />
            <Toggle label="Draw Empty Views On Initialize" labelWidth={180} h={25} />
            <Field label="Category Item View Set" labelWidth={187} h={26} text="Category Item View Set For Shop" icon={<CategorySet />} />
            <Group>
              <GroupRow>
                <PropertyLabel as="span" $w={187}>Database</PropertyLabel>
                <ObjectField label="Database" text="InventoryDatabase (Inventory System)" icon={<DatabaseIcon />} />
              </GroupRow>
              <GroupRow>
                <PropertyLabel as="span" $w={180}>Empty Item View</PropertyLabel>
                <ObjectField label="Empty Item View" text="None (Game Object)" icon={<Cube size={14} />} />
              </GroupRow>
              <ListBox>
                <ListHead>Category Item Views</ListHead>
                <ListRow>
                  <DragHandle />
                  <PropertyLabel as="span" $w={184}>Category</PropertyLabel>
                  <CategoryValue>None</CategoryValue>
                  <ChangeButton>Change</ChangeButton>
                </ListRow>
                <ListRow>
                  <ListIndent />
                  <PropertyLabel as="span" $w={183} $accent>Item View Prefab</PropertyLabel>
                  <Marked><ObjectField label="Item View Prefab" text="Item View For Shop" icon={<Prefab size={14} />} /></Marked>
                </ListRow>
              </ListBox>
              <ListFooter>
                <IconButton aria-label="Add"><Glyph width="11" height="11" viewBox="0 0 11 11" strokeWidth="2"><path d="M5.500 0v11M0 5.500h11" /></Glyph></IconButton>
                <IconButton aria-label="Remove" disabled><Glyph width="8" height="2" viewBox="0 0 8 2" strokeWidth="2"><path d="M0 1h8" /></Glyph></IconButton>
              </ListFooter>
            </Group>
          </Rows>
          <Header title="Item View Slot Container Description Binding" open />
          <Rows $end={8} $pad="4px 0 10px">
            <Field label="Script" text="ItemViewSlotContainerDescriptionBinding" icon={script} dim />
            <Field label="Item Description Panel" text="None (Item Description Panel Binding)" pencil />
            <Field label="Item Description" text="Item Description Big (Item Description)" icon={script} pencil />
            <Toggle label="Hide If Selected Item Is Null" />
            <Toggle label="Draw On Select" checked />
            <Toggle label="Draw On Click" />
            <Toggle label="Clear On Deselected" />
            <Toggle label="Hide On Deselected" />
          </Rows>
          <Header title="Grid Navigator With Scrollbar (Script)" open />
          <Rows $end={8} $pad="4px 0 0">
            <Field label="Script" text="GridNavigatorWithScrollbar" icon={script} dim />
            <Field label="Grid" text="Shop Inventory Grid (Item Info Grid)" icon={script} pencil />
            <Field label="Tab Control" text="None (Tab Control)" pencil />
            <Field label="Previous Button" text="Button Up (Button)" icon={<ButtonIcon />} pencil />
            <Field label="Next Button" text="Button Down (Button)" icon={<ButtonIcon />} pencil />
            <Field label="Scrollbar" text="Scrollbar With Buttons (Scrollbar" icon={script} pencil />
            <Toggle label="Vertical" checked />
          </Rows>
        </Components>
        <ScrollTrack $lead={8} $start={52} $size={42}><CaretUp /><Caret size={9} /></ScrollTrack>
      </InspectorBody>
    </SidePanel>
  );
}

const meterColors = [
  ...Array(8).fill('#343843'),
  '#a99a45', '#a39d4b', '#97a04f', '#8aa356', '#7ba660', '#6da76c', '#61a778', '#56a684', '#4ea58d', '#48a394', '#46a29a',
];

export default function App() {
  return (
    <Editor>
      <Global />
      <Workspace>
        <Hierarchy />
        <Scene />
        <Project />
      </Workspace>
      <Inspector />
      <Rail />
      <Meter>
        <svg width="6" height="57" viewBox="0 0 6 57" aria-hidden="true">
          {meterColors.map((c, i) => <rect key={i} y={i * 3} width="6" height="2" fill={c} />)}
        </svg>
      </Meter>
      <Annotation width="1200" height="343" viewBox="444 405 1200 343" aria-hidden="true">
        <path d="M444 747.500L1627.500 409.500 1625 405.500 1644 410.800 1630.500 423 1631 418.500 444 748.500z" fill="#ff2213" />
      </Annotation>
      <Watermark>CSDN @adogai</Watermark>
    </Editor>
  );
}
